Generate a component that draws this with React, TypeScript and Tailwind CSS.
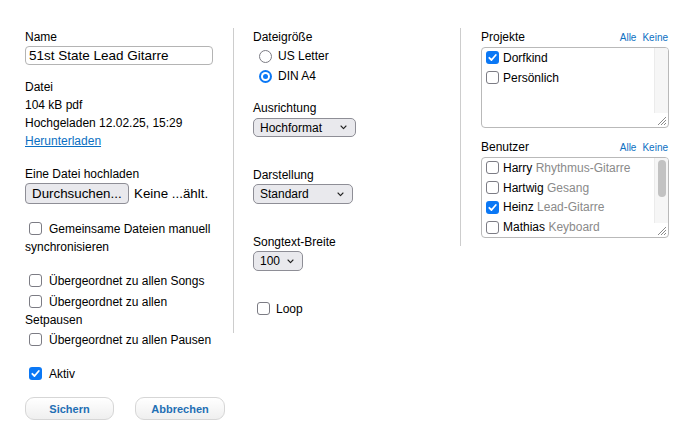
import React from "react";

function Check({ checked = false, className = "" }: { checked?: boolean; className?: string }) {
  if (checked) {
    return (
      <span className={`relative inline-block w-[13px] h-[13px] rounded-[3px] bg-[#0b78f5] align-[-2px] shrink-0 ${className}`}>
        <svg className="absolute left-[1px] top-[1px]" width="11" height="11" viewBox="0 0 11 11">
          <path d="M2.3 5.8 L4.5 8 L8.8 3" fill="none" stroke="#fff" strokeWidth="1.8" strokeLinecap="round" strokeLinejoin="round" />
        </svg>
      </span>
    );
  }
  return (
    <span className={`inline-block w-[13px] h-[13px] rounded-[3px] border-[1.5px] border-[#7c7c84] bg-white align-[-2px] shrink-0 ${className}`} />
  );
}

function Radio({ checked = false }: { checked?: boolean }) {
  if (checked) {
    return (
      <span className="inline-flex items-center justify-center w-[13px] h-[13px] rounded-full bg-[#0b78f5] shrink-0">
        <span className="w-[9px] h-[9px] rounded-full bg-white flex items-center justify-center">
          <span className="w-[5px] h-[5px] rounded-full bg-[#0b78f5]" />
        </span>
      </span>
    );
  }
  return <span className="inline-block w-[13px] h-[13px] rounded-full border-[1.5px] border-[#7c7c84] bg-white shrink-0" />;
}

function Select({ label, w, h = "h-[20px]" }: { label: string; w: string; h?: string }) {
  return (
    <div className={`${w} ${h} flex items-center justify-between rounded-[5px] border border-[#8e8e96] bg-[#e9e9ed] pl-[6px] pr-[8px] text-[12px]`}>
      <span>{label}</span>
      <svg width="7" height="5" viewBox="0 0 7 5">
        <path d="M1 1 L3.5 3.6 L6 1" fill="none" stroke="#222" strokeWidth="1.1" strokeLinecap="round" strokeLinejoin="round" />
      </svg>
    </div>
  );
}

function Grip() {
  return (
    <svg className="absolute right-[1px] bottom-[1px]" width="11" height="11" viewBox="0 0 11 11">
      <path d="M10 2 L2 10 M10 5 L5 10 M10 8 L8 10" stroke="#8a8a8a" strokeWidth="1" />
    </svg>
  );
}

function ListBox({
  items,
  thumb = false,
}: {
  items: { name: string; role?: string; checked?: boolean }[];
  thumb?: boolean;
}) {
  return (
    <div className="relative w-[188px] h-[81px] rounded-[4px] border border-[#b9b9b9] bg-white overflow-hidden flex">
      <div className="flex-1 flex flex-col">
        {items.map((it) => (
          <div key={it.name} className="h-[19.75px] flex items-center pl-[4px] gap-[4px] shrink-0 whitespace-nowrap">
            <Check checked={it.checked} />
            <span>
              {it.name}
              {it.role && <span className="text-[#8a8a8a]"> {it.role}</span>}
            </span>
          </div>
        ))}
      </div>
      <div className="w-[14px] h-[65px] bg-[#f6f6f6] border-l border-[#ebebeb] relative">
        {thumb && <div className="absolute left-[3px] top-[2px] w-[8px] h-[37px] rounded-full bg-[#c2c2c2]" />}
      </div>
      <Grip />
    </div>
  );
}

export default function App() {
  return (
    <div className="w-[697px] h-[436px] bg-white text-black text-[12px] leading-[18px] font-['Liberation_Sans',Arial,sans-serif] flex items-start pt-[28px] pl-[25px]">
      {/* Column 1 */}
      <div className="w-[188px] flex flex-col">
        <div>Name</div>
        <div className="h-[19px] rounded-[4px] border border-[#b4b4b4] bg-white pl-[3px] text-[13.5px] leading-[17px] whitespace-nowrap">
          51st State Lead Gitarre
        </div>
        <div className="mt-[13px]">Datei</div>
        <div>104 kB pdf</div>
        <div>Hochgeladen 12.02.25, 15:29</div>
        <div>
          <a className="text-[#0b6fc2] underline">Herunterladen</a>
        </div>
        <div className="mt-[15px]">Eine Datei hochladen</div>
        <div className="h-[21px] flex items-center whitespace-nowrap text-[13.33px]">
          <div className="h-[21px] w-[104px] flex items-center rounded-[4px] border border-[#8e8e96] bg-[#e9e9ed] pl-[6px]">
            Durchsuchen...
          </div>
          <span className="ml-[5px]">Keine ...ählt.</span>
        </div>
        <p className="mt-[16px]">
          <Check className="ml-[4px] mr-[7px]" />Gemeinsame Dateien manuell synchronisieren
        </p>
        <p className="mt-[16px]">
          <Check className="ml-[4px] mr-[7px]" />Übergeordnet zu allen Songs
        </p>
        <p className="mt-[3px]">
          <Check className="ml-[4px] mr-[7px]" />Übergeordnet zu allen Setpausen
        </p>
        <p className="mt-[2px] whitespace-nowrap">
          <Check className="ml-[4px] mr-[7px]" />Übergeordnet zu allen Pausen
        </p>
        <p className="mt-[16px]">
          <Check checked className="ml-[4px] mr-[7px]" />Aktiv
        </p>
        <div className="mt-[14px] flex gap-[21px] w-max">
          <button className="w-[89px] h-[23px] rounded-[9px] border border-[#d6d6d6] bg-gradient-to-b from-white to-[#efefef] text-[11px] font-bold text-[#1f6fb4]">
            Sichern
          </button>
          <button className="w-[90px] h-[23px] rounded-[9px] border border-[#d6d6d6] bg-gradient-to-b from-white to-[#efefef] text-[11px] font-bold text-[#1f6fb4]">
            Abbrechen
          </button>
        </div>
      </div>

      {/* Column 2 */}
      <div className="ml-[20px] w-[227px] border-l border-[#cdcdcd] pl-[19px] pb-[15px] flex flex-col">
        <div>Dateigröße</div>
        <div className="h-[20px] leading-[20px] flex items-center">
          <span className="ml-[6px] mr-[6px] flex"><Radio /></span>US Letter
        </div>
        <div className="h-[20px] leading-[20px] flex items-center">
          <span className="ml-[6px] mr-[6px] flex"><Radio checked /></span>DIN A4
        </div>
        <div className="mt-[13px]">Ausrichtung</div>
        <div className="mt-[1px]">
          <Select label="Hochformat" w="w-[103px]" h="h-[19px]" />
        </div>
        <div className="mt-[29px]">Darstellung</div>
        <Select label="Standard" w="w-[100px]" />
        <div className="mt-[29px]">Songtext-Breite</div>
        <Select label="100" w="w-[50px]" />
        <p className="mt-[29px]">
          <Check className="ml-[4px] mr-[6px]" />Loop
        </p>
      </div>

      {/* Column 3 */}
      <div className="w-[209px] border-l border-[#cdcdcd] pl-[20px] pb-[8px] flex flex-col">
        <div className="w-[188px] flex items-baseline justify-between">
          <span>Projekte</span>
          <span className="text-[10px] text-[#0b6fc2] pr-[1px] flex gap-[6px]">
            <span>Alle</span>
            <span>Keine</span>
          </span>
        </div>
        <ListBox
          items={[
            { name: "Dorfkind", checked: true },
            { name: "Persönlich" },
          ]}
        />
        <div className="mt-[10px] w-[188px] flex items-baseline justify-between">
          <span>Benutzer</span>
          <span className="text-[10px] text-[#0b6fc2] pr-[1px] flex gap-[6px]">
            <span>Alle</span>
            <span>Keine</span>
          </span>
        </div>
        <ListBox
          thumb
          items={[
            { name: "Harry", role: "Rhythmus-Gitarre" },
            { name: "Hartwig", role: "Gesang" },
            { name: "Heinz", role: "Lead-Gitarre", checked: true },
            { name: "Mathias", role: "Keyboard" },
          ]}
        />
      </div>
    </div>
  );
}
